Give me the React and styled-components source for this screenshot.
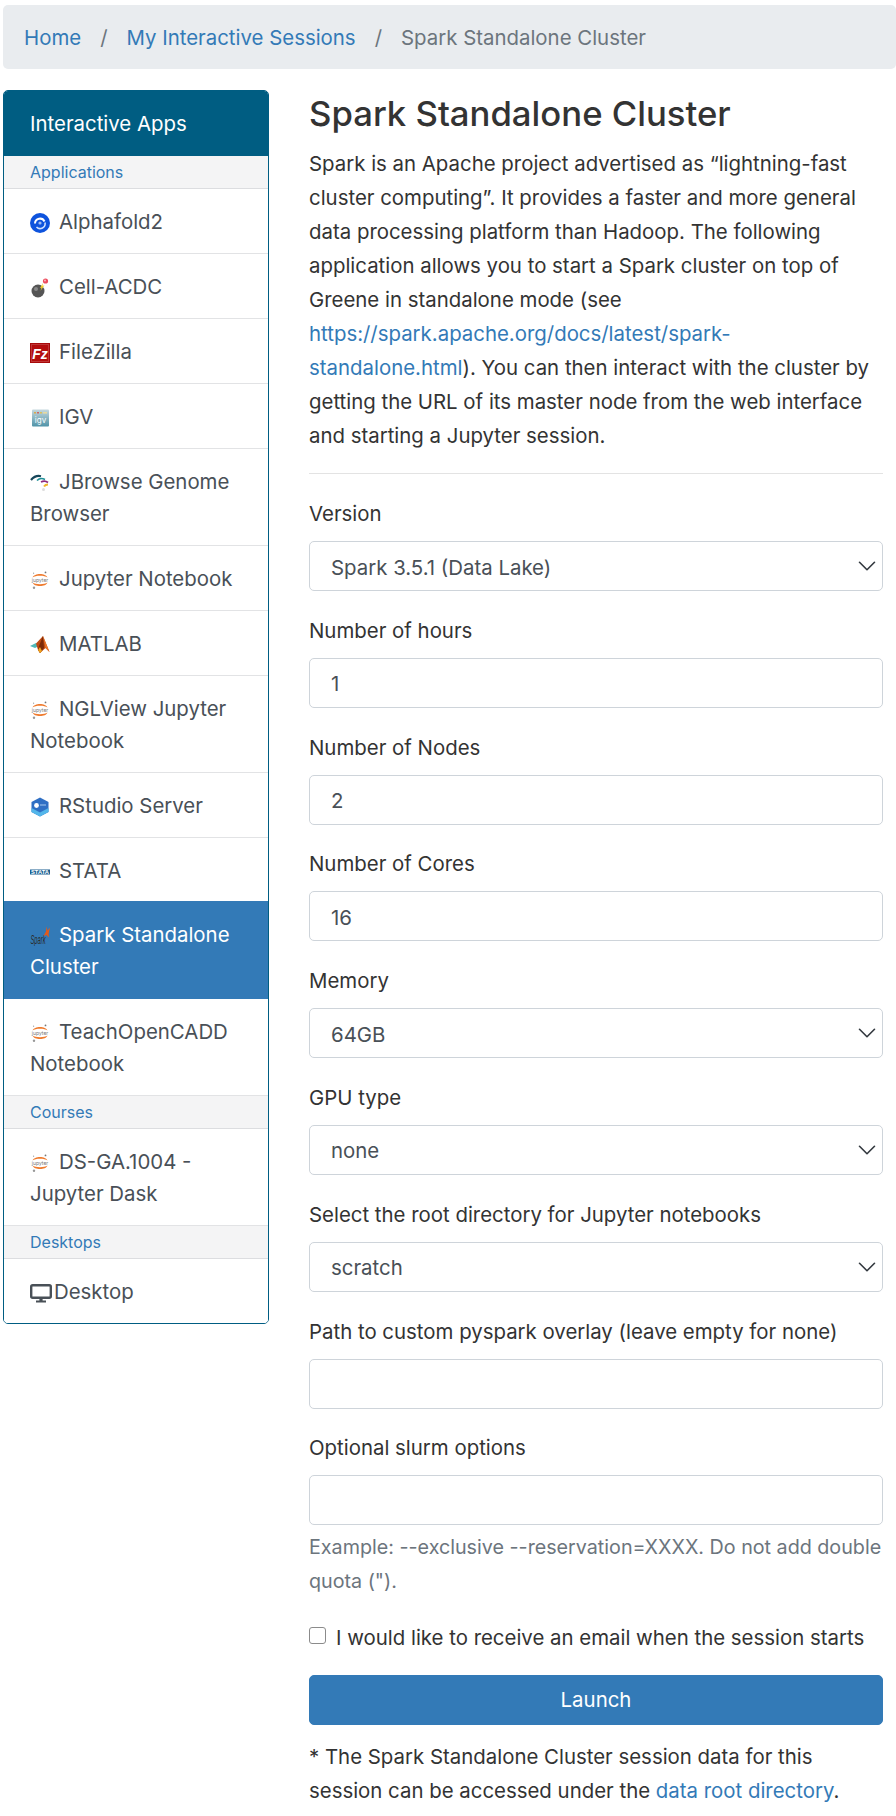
import React from "react";
import styled, { createGlobalStyle } from "styled-components";

const Global = createGlobalStyle`
  html, body { margin: 0; padding: 0; background: #fff; }
  body { font-family: Inter, "Noto Sans", "Liberation Sans", sans-serif; font-size: 20.4px; line-height: 34px; color: #333; }
  * { box-sizing: border-box; }
`;

const Page = styled.div`
  padding: 5px 0 0 3px;
  width: 896px;
`;
const Breadcrumb = styled.nav`
  display: flex;
  align-items: center;
  height: 64px;
  padding: 1px 21px 0;
  background: #e9ecef;
  border-radius: 5px;
  margin-bottom: 21px;
`;
const Crumb = styled.a`
  color: ${(p) => (p.$active ? "#6c757d" : "#337ab7")};
  text-decoration: none;
`;
const Slash = styled.span`
  color: #6c757d;
  padding: 0 19px;
`;
const Columns = styled.div`
  display: flex;
  align-items: flex-start;
  gap: 40px;
`;
const Sidebar = styled.aside`
  width: 266px;
  flex: none;
  border: 1px solid #005d82;
  border-radius: 5px;
  overflow: hidden;
`;
const SideHeader = styled.div`
  background: #005d82;
  color: #fff;
  height: 66px;
  margin: -1px -1px 0;
  padding: 2px 27px 0;
  display: flex;
  align-items: center;
`;
const SideGroup = styled.div`
  background: #f4f4f5;
  color: #337ab7;
  font-size: 16px;
  line-height: 32px;
  height: 33px;
  padding: 0 26px;
  border-bottom: 1px solid #dcdde0;
`;
const SideItem = styled.a`
  display: block;
  padding: ${(p) => (p.$active ? "18px 26px 16px" : "17px 26px 15px")};
  margin-top: ${(p) => (p.$active ? "-2px" : "0")};
  line-height: 32px;
  position: relative;
  color: ${(p) => (p.$active ? "#fff" : "#495057")};
  background: ${(p) => (p.$active ? "#337ab7" : "#fff")};
  border-bottom: ${(p) => (p.$active ? "0" : "1px solid #e2e3e5")};
  &:last-child { border-bottom: 0; }
`;
const IconSlot = styled.svg`
  display: inline-block;
  width: 20px;
  height: 20px;
  vertical-align: -4px;
  margin-right: 9px;
`;
const DesktopSlot = styled.svg`
  display: inline-block;
  width: 22px;
  height: 20px;
  vertical-align: -4px;
  margin-right: 2px;
`;
const Main = styled.main`
  width: 574px;
  flex: none;
`;
const Title = styled.h2`
  margin: 2px 0 12px;
  font-size: 34.7px;
  line-height: 43px;
  font-weight: 500;
  color: #333;
`;
const Intro = styled.p`
  margin: 0;
  a { color: #337ab7; text-decoration: none; }
`;
const Rule = styled.hr`
  border: 0;
  border-top: 1px solid #e3e3e3;
  margin: 20px 0 23px;
`;
const Field = styled.div`
  margin-bottom: 22.8px;
`;
const Label = styled.label`
  display: block;
  line-height: 34px;
  margin-bottom: 10px;
  color: #333;
`;
const control = `
  display: block;
  width: 100%;
  height: 50px;
  padding: 2px 21px 0;
  font: inherit;
  line-height: 34px;
  color: #495057;
  background-color: #fff;
  border: 1px solid #ced4da;
  border-radius: 5px;
  outline: none;
`;
const Input = styled.input`${control}`;
const Select = styled.select`
  ${control}
  padding-top: 3px;
  appearance: none;
  background-image: url("data:image/svg+xml,%3csvg xmlns='http://www.w3.org/2000/svg' viewBox='0 0 16 16'%3e%3cpath fill='none' stroke='%23343a40' stroke-linecap='round' stroke-linejoin='round' stroke-width='1.3' d='M2 5l6 6 6-6'/%3e%3c/svg%3e");
  background-repeat: no-repeat;
  background-position: right 5px center;
  background-size: 20px 20px;
`;
const Help = styled.div`
  margin-top: 5px;
  color: #6c757d;
  line-height: 34px;
  font-size: 19.72px;
`;
const CheckRow = styled.label`
  display: flex;
  align-items: center;
  gap: 10px;
  height: 34px;
  margin: 5.5px 0 20px;
`;
const Check = styled.input`
  width: 17px;
  height: 17px;
  margin: 0;
  flex: none;
  appearance: none;
  background: #fff;
  border: 1px solid #8b8b8b;
  border-radius: 3px;
  position: relative;
  top: -3px;
`;
const Launch = styled.button`
  display: block;
  width: 100%;
  height: 50px;
  background: #337ab7;
  color: #fff;
  border: 1px solid #337ab7;
  border-radius: 5px;
  font: inherit;
`;
const Note = styled.p`
  margin: 15px 0 0;
  a { color: #337ab7; text-decoration: none; }
`;

const Jupyter = () => (
  <IconSlot viewBox="0 0 20 20">
    <path d="M2.5 7.5C4 2.8 16 2.8 17.5 7.5C14.5 5.2 5.5 5.2 2.5 7.5Z" fill="#ef7b2e" />
    <path d="M2.5 12.5C4 17.2 16 17.2 17.5 12.5C14.5 14.8 5.5 14.8 2.5 12.5Z" fill="#ef7b2e" />
    <text x="10" y="11.6" fontSize="5" textAnchor="middle" fill="#777" fontFamily="Inter, sans-serif">jupyter</text>
    <circle cx="15.5" cy="2.4" r="0.9" fill="#777" />
    <circle cx="4" cy="17.8" r="1.2" fill="#999" />
    <circle cx="3.6" cy="3.2" r="0.6" fill="#999" />
  </IconSlot>
);
const Alpha = () => (
  <IconSlot viewBox="0 0 20 20">
    <circle cx="10" cy="10" r="10" fill="#0e53dd" />
    <path d="M5 10.5A5 5 0 0 1 14.5 8.5" stroke="#fff" strokeWidth="2" fill="none" />
    <path d="M15 9.5A5 5 0 0 1 6.5 14" stroke="#cfe0ff" strokeWidth="1.6" fill="none" />
    <circle cx="10" cy="10" r="1.6" fill="#fff" opacity="0.6" />
  </IconSlot>
);
const Bomb = () => (
  <IconSlot viewBox="0 0 20 20">
    <circle cx="8" cy="13" r="6.5" fill="#555" />
    <circle cx="6" cy="11" r="2" fill="#888" />
    <path d="M10 10l3-5-.5 3 2-.7-4 5.5 1-3z" fill="#f2cf2a" />
    <circle cx="15.5" cy="3" r="2.6" fill="#ee4b5d" />
    <circle cx="15" cy="2.5" r="1" fill="#f9b5bc" />
  </IconSlot>
);
const FileZ = () => (
  <IconSlot viewBox="0 0 20 20">
    <rect width="20" height="20" fill="#a80a0a" />
    <rect x="1.5" y="1.5" width="17" height="17" fill="#b30d0d" stroke="#e8a0a0" strokeWidth="0.6" strokeDasharray="1 1" />
    <text x="10" y="15.5" fontSize="14" fontWeight="700" fontStyle="italic" textAnchor="middle" fill="#fff" fontFamily="Liberation Sans, sans-serif">Fz</text>
  </IconSlot>
);
const Igv = () => (
  <IconSlot viewBox="0 0 20 20">
    <defs>
      <linearGradient id="igvg" x1="0" y1="0" x2="0" y2="1">
        <stop offset="0" stopColor="#c6d8de" />
        <stop offset="1" stopColor="#4f93a8" />
      </linearGradient>
    </defs>
    <rect x="2" y="1.5" width="17" height="17" rx="1" fill="url(#igvg)" />
    <path d="M4 4h2v1.6H4z" fill="#d9a94c" /><path d="M7 4h2v1.6H7z" fill="#c66" /><path d="M10 4h2v1.6h-2z" fill="#dcc05a" /><path d="M13 4h4v1.6h-4z" fill="#e8d9a0" />
    <text x="10.5" y="14.5" fontSize="8" textAnchor="middle" fill="#fff" fontFamily="Inter, sans-serif">igv</text>
  </IconSlot>
);
const JBrowse = () => (
  <IconSlot viewBox="0 0 20 20">
    <path d="M1 7C4 3.5 8 2.5 11 3.2" stroke="#17465a" strokeWidth="2.2" fill="none" />
    <path d="M7 7.5C9 5.5 12 5 15 6.5" stroke="#1d8e96" strokeWidth="1.6" fill="none" />
    <path d="M11 9C13 8 16 8 18 9.5" stroke="#8e2a7d" strokeWidth="1.8" fill="none" />
    <path d="M14 13.5C15 12 16.5 11.5 18 11.5" stroke="#f0b52a" strokeWidth="2" fill="none" />
    <circle cx="13.5" cy="16.5" r="1.5" fill="#ddd" />
  </IconSlot>
);
const Matlab = () => (
  <IconSlot viewBox="0 0 20 20">
    <path d="M0 11L6 8 9 11 5 13Z" fill="#4fb8b8" />
    <path d="M6 8.5L13 1 19.5 17 15.5 13 10 18 8 15Z" fill="#bf4a12" />
    <path d="M13 1L9 11 8 15 10 18 14 13Z" fill="#7c2a08" />
    <path d="M8 15L10 18 12 16 10 12Z" fill="#f2a51f" />
    <path d="M13 1L19.5 17 15.5 13Z" fill="#e8762a" />
  </IconSlot>
);
const RStudio = () => (
  <IconSlot viewBox="0 0 20 20">
    <path d="M10 0.5L18.5 5V15L10 19.5 1.5 15V5Z" fill="#2f6fc4" />
    <path d="M1.5 11L10 15.5 18.5 11V15L10 19.5 1.5 15Z" fill="#53b6ea" />
    <circle cx="6.5" cy="8.5" r="2.4" fill="#fff" />
    <path d="M10 8h6" stroke="#a8cbee" strokeWidth="1" />
  </IconSlot>
);
const Stata = () => (
  <IconSlot viewBox="0 0 20 20">
    <rect x="0" y="7.5" width="20" height="5" fill="#1a5f91" />
    <text x="1" y="11.6" fontSize="4.6" fontWeight="700" fill="#fff" fontFamily="Liberation Sans, sans-serif" textLength="18" lengthAdjust="spacingAndGlyphs">STATA</text>
  </IconSlot>
);
const Spark = () => (
  <IconSlot viewBox="0 0 20 20">
    <text x="0.5" y="18" fontSize="13" fontStyle="italic" fill="#2a2a2a" fontFamily="Liberation Sans, sans-serif" textLength="15" lengthAdjust="spacingAndGlyphs">Spark</text>
    <path d="M13.5 10L16 5.5 16.5 0.5 17.5 4.5 20 1.5 18.5 8 19 11.5 16.5 9Z" fill="#e25a1c" />
  </IconSlot>
);
const Monitor = () => (
  <DesktopSlot viewBox="0 0 22 20" fill="none">
    <rect x="1.2" y="2.2" width="19.6" height="12.6" rx="1.5" stroke="#495057" strokeWidth="2.4" />
    <path d="M11 15v3" stroke="#495057" strokeWidth="3.2" />
    <path d="M6 18.5h10" stroke="#495057" strokeWidth="2" />
  </DesktopSlot>
);

const Item = ({ icon, children, active }) => (
  <SideItem $active={active}>
    {icon}
    {children}
  </SideItem>
);

const SelectField = ({ label, value }) => (
  <Field>
    <Label>{label}</Label>
    <Select defaultValue={value}>
      <option>{value}</option>
    </Select>
  </Field>
);
const InputField = ({ label, value, help }) => (
  <Field>
    <Label>{label}</Label>
    <Input defaultValue={value} />
    {help && <Help>{help}</Help>}
  </Field>
);

export default function App() {
  return (
    <Page>
      <Global />
      <Breadcrumb>
        <Crumb>Home</Crumb>
        <Slash>/</Slash>
        <Crumb>My Interactive Sessions</Crumb>
        <Slash>/</Slash>
        <Crumb $active>Spark Standalone Cluster</Crumb>
      </Breadcrumb>
      <Columns>
        <Sidebar>
          <SideHeader>Interactive Apps</SideHeader>
          <SideGroup>Applications</SideGroup>
          <Item icon={<Alpha />}>Alphafold2</Item>
          <Item icon={<Bomb />}>Cell-ACDC</Item>
          <Item icon={<FileZ />}>FileZilla</Item>
          <Item icon={<Igv />}>IGV</Item>
          <Item icon={<JBrowse />}>JBrowse Genome Browser</Item>
          <Item icon={<Jupyter />}>Jupyter Notebook</Item>
          <Item icon={<Matlab />}>MATLAB</Item>
          <Item icon={<Jupyter />}>NGLView Jupyter Notebook</Item>
          <Item icon={<RStudio />}>RStudio Server</Item>
          <Item icon={<Stata />}>STATA</Item>
          <Item icon={<Spark />} active>Spark Standalone Cluster</Item>
          <Item icon={<Jupyter />}>TeachOpenCADD Notebook</Item>
          <SideGroup>Courses</SideGroup>
          <Item icon={<Jupyter />}>DS-GA.1004 - Jupyter Dask</Item>
          <SideGroup>Desktops</SideGroup>
          <Item icon={<Monitor />}>Desktop</Item>
        </Sidebar>
        <Main>
          <Title>Spark Standalone Cluster</Title>
          <Intro>
            Spark is an Apache project advertised as “lightning-fast cluster computing”. It provides a faster and more general data processing platform than Hadoop. The following application allows you to start a Spark cluster on top of Greene in standalone mode (see{" "}
            <a>https://spark.apache.org/docs/latest/spark-standalone.html</a>). You can then interact with the cluster by getting the URL of its master node from the web interface and starting a Jupyter session.
          </Intro>
          <Rule />
          <SelectField label="Version" value="Spark 3.5.1 (Data Lake)" />
          <InputField label="Number of hours" value="1" />
          <InputField label="Number of Nodes" value="2" />
          <InputField label="Number of Cores" value="16" />
          <SelectField label="Memory" value="64GB" />
          <SelectField label="GPU type" value="none" />
          <SelectField label="Select the root directory for Jupyter notebooks" value="scratch" />
          <InputField label="Path to custom pyspark overlay (leave empty for none)" value="" />
          <InputField label="Optional slurm options" value="" help={'Example: --exclusive --reservation=XXXX. Do not add double quota (").'} />
          <CheckRow>
            <Check type="checkbox" />
            I would like to receive an email when the session starts
          </CheckRow>
          <Launch>Launch</Launch>
          <Note>
            * The Spark Standalone Cluster session data for this session can be accessed under the <a>data root directory</a>.
          </Note>
        </Main>
      </Columns>
    </Page>
  );
}
